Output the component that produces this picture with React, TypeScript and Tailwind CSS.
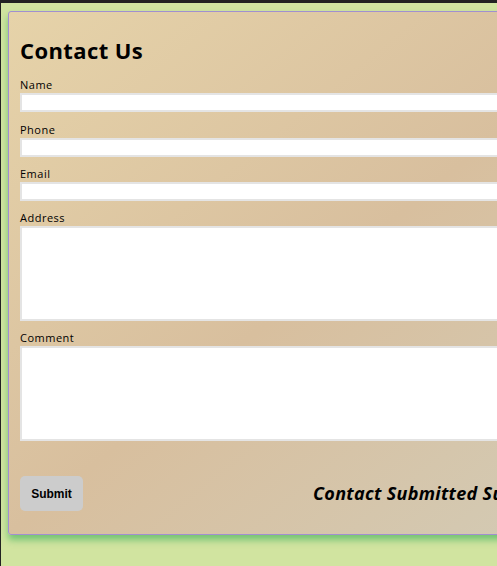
export default function App() {
  const fields = [
    { label: "Name", tall: false },
    { label: "Phone", tall: false },
    { label: "Email", tall: false },
    { label: "Address", tall: true },
    { label: "Comment", tall: true },
  ]

  return (
    <main className="h-[566px] w-[497px] overflow-hidden border-t-[3px] border-l border-[#222222] bg-[#d1e4a0] font-['Open_Sans',sans-serif]">
      <div className="ml-[7px] mt-[8px] w-[640px] rounded-[3px] border border-[#a18fd0] bg-gradient-to-br from-[#e6d3a9] via-[#d8bf9e] to-[#d2ccb8] px-[11px] pt-[23px] pb-[23px] shadow-[0_5px_7px_rgba(40,170,80,0.55)]">
        <h1 className="text-[22px] leading-[30px] font-bold tracking-[0.4px] text-black">Contact Us</h1>

        <form className="mt-[12px]" onSubmit={(e) => e.preventDefault()}>
          {fields.map((f, i) => (
            <div key={f.label} className={i === 0 ? "mb-[10px]" : "mb-[9px]"}>
              <label className="mb-[1px] block text-[11px] leading-[15px] tracking-[0.5px] text-black">
                {f.label}
              </label>
              {f.tall ? (
                <textarea className="block h-[95px] w-[620px] resize-none border-2 border-[#e4e4e4] bg-white" />
              ) : (
                <input className="block h-[19px] w-[620px] border-2 border-[#e4e4e4] bg-white" />
              )}
            </div>
          ))}

          <div className="mt-[35px] flex items-center">
            <button
              type="submit"
              className="h-[35px] w-[63px] shrink-0 rounded-[5px] bg-[#cccccc] font-['Liberation_Sans',sans-serif] text-[12px] font-bold text-black"
            >
              Submit
            </button>
            <p className="ml-[230px] whitespace-nowrap text-[18px] font-bold italic tracking-[0.3px] text-black">
              Contact Submitted Successfully
            </p>
          </div>
        </form>
      </div>
    </main>
  )
}
